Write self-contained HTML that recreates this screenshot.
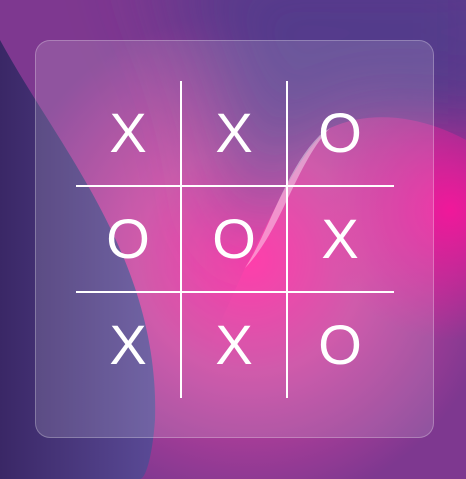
<!DOCTYPE html>
<html><head><style>
html,body{margin:0;padding:0;width:466px;height:479px;overflow:hidden;background:#513b8b}
.bg{position:absolute;left:0;top:0}
.card{position:absolute;left:35px;top:40px;width:399px;height:398px;border-radius:15px;background:rgba(255,255,255,0.14);border:1px solid rgba(255,255,255,0.25);box-sizing:border-box}
.l{position:absolute;background:#fff}
.c{position:absolute;width:106px;height:106px;color:#fff;font-family:"Liberation Sans",sans-serif;font-size:56px;line-height:106px;text-align:center}
</style></head><body>
<svg class="bg" width="466" height="479" viewBox="0 0 466 479">
<defs>
<radialGradient id="p" cx="250" cy="260" r="250" gradientUnits="userSpaceOnUse">
<stop offset="0" stop-color="#ff1f9e"/><stop offset="0.45" stop-color="#c8409e"/><stop offset="1" stop-color="#7e3890"/>
</radialGradient>
<radialGradient id="q" cx="450" cy="210" r="130" gradientUnits="userSpaceOnUse">
<stop offset="0" stop-color="#f0189a"/><stop offset="1" stop-color="#f0189a" stop-opacity="0"/>
</radialGradient>
<linearGradient id="d" x1="0" y1="0" x2="1" y2="0">
<stop offset="0" stop-color="#3a2766"/><stop offset="1" stop-color="#5a4a96"/>
</linearGradient>
<filter id="b" x="-50%" y="-50%" width="200%" height="200%"><feGaussianBlur stdDeviation="45"/></filter>
<clipPath id="w"><path d="M245 268 C275 210 300 150 330 128 C370 110 420 115 466 140 L466 479 L150 479Z"/></clipPath>
</defs>
<rect width="466" height="479" fill="url(#p)"/>
<rect width="466" height="479" fill="url(#q)"/>
<path d="M150 -60 L520 -60 L520 140 C420 115 370 110 330 128 C300 150 275 210 245 268 C240 160 220 60 150 -60Z" fill="#533b8b" filter="url(#b)"/>
<g clip-path="url(#w)">
<rect width="466" height="479" fill="url(#p)"/>
<rect width="466" height="479" fill="url(#q)"/>
</g>
<path d="M0 40 C60 150 160 260 155 420 C152 460 145 479 140 479 L0 479Z" fill="url(#d)"/>
<path d="M245 268 C270 230 285 170 320 135 L330 128 C295 165 282 230 245 268Z" fill="#ffffff" opacity="0.4"/>
</svg>
<div class="card"></div>
<div class="l" style="left:180px;top:81px;width:2px;height:317px"></div>
<div class="l" style="left:286px;top:81px;width:2px;height:317px"></div>
<div class="l" style="left:76px;top:185px;width:318px;height:2px"></div>
<div class="l" style="left:76px;top:291px;width:318px;height:2px"></div>
<div class="c" style="left:75px;top:80px">X</div>
<div class="c" style="left:181px;top:80px">X</div>
<div class="c" style="left:287px;top:80px">O</div>
<div class="c" style="left:75px;top:186px">O</div>
<div class="c" style="left:181px;top:186px">O</div>
<div class="c" style="left:287px;top:186px">X</div>
<div class="c" style="left:75px;top:292px">X</div>
<div class="c" style="left:181px;top:292px">X</div>
<div class="c" style="left:287px;top:292px">O</div>
</body></html>
